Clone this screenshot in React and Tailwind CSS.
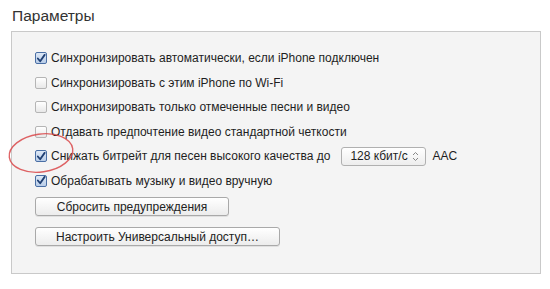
import React from "react";

function Check({ checked }) {
	return (
		<span
			className={
				"w-[12px] h-[12px] rounded-[2px] border flex items-center justify-center shrink-0 " +
				(checked
					? "border-[#4a6fa5] bg-gradient-to-b from-[#dde8f6] to-[#b9cde8]"
					: "border-[#b5b5b5] bg-gradient-to-b from-[#ffffff] to-[#e8e8e8]")
			}
		>
			{checked && (
				<svg width="11" height="11" viewBox="0 0 11 11">
					<path d="M2 5.5 L4.6 8.5 L9.5 1.5" fill="none" stroke="#1f3f73" strokeWidth="2" strokeLinecap="round" strokeLinejoin="round" />
				</svg>
			)}
		</span>
	);
}

function Row({ checked, children }) {
	return (
		<div className="flex items-center gap-[4px] h-[24.5px]">
			<Check checked={checked} />
			<span className="flex items-center">{children}</span>
		</div>
	);
}

function Btn({ children, w }) {
	return (
		<button className={"h-[19px] rounded-[3px] border border-[#a9a9a9] bg-gradient-to-b from-[#ffffff] to-[#ececec] text-[12px] text-[#222] shadow-[0_1px_0_rgba(0,0,0,0.08)] " + w}>
			{children}
		</button>
	);
}

export default function App() {
	return (
		<div className="w-[550px] h-[289px] bg-white relative font-['Liberation_Sans',Arial,sans-serif] text-[#1e1e1e]">
			<h2 className="pl-[12px] pt-[5px] text-[15.5px] text-[#333] leading-[22px]">Параметры</h2>
			<div className="ml-[11px] mt-[4px] w-[530px] h-[243px] bg-[#f4f4f4] border border-[#c9c9c9] pl-[23px] pt-[14px] text-[12px]">
				<Row checked>Синхронизировать автоматически, если iPhone подключен</Row>
				<Row>Синхронизировать с этим iPhone по Wi-Fi</Row>
				<Row>Синхронизировать только отмеченные песни и видео</Row>
				<Row>Отдавать предпочтение видео стандартной четкости</Row>
				<Row checked>
					Снижать битрейт для песен высокого качества до
					<span className="ml-[11px] h-[19px] w-[85px] rounded-[3px] border border-[#b0b0b0] bg-gradient-to-b from-[#ffffff] to-[#ededed] flex items-center justify-between pl-[8px] pr-[6px]">
						128 кбит/с
						<svg width="7" height="11" viewBox="0 0 7 11">
							<path d="M1 4 L3.5 1.5 L6 4 M1 7 L3.5 9.5 L6 7" fill="none" stroke="#888" strokeWidth="1" />
						</svg>
					</span>
					<span className="ml-[6px]">AAC</span>
				</Row>
				<Row checked>Обрабатывать музыку и видео вручную</Row>
				<div className="flex flex-col gap-[11px] mt-[4px]">
					<Btn w="w-[194px]">Сбросить предупреждения</Btn>
					<Btn w="w-[245px]">Настроить Универсальный доступ…</Btn>
				</div>
			</div>
			<svg className="absolute left-0 top-0 pointer-events-none" width="550" height="289">
				<ellipse cx="41" cy="153" rx="32" ry="19" transform="rotate(-8 41 153)" fill="none" stroke="#d9484a" strokeWidth="1.4" opacity="0.85" />
			</svg>
		</div>
	);
}
